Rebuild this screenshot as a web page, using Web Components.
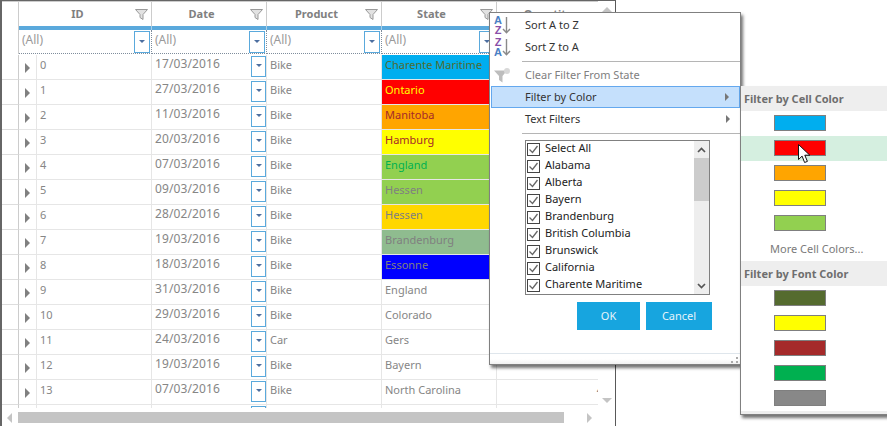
<!DOCTYPE html>
<html><head><meta charset="utf-8"><title>Grid filter</title>
<style>html,body{margin:0;padding:0;background:#fff}</style></head>
<body>
<grid-app></grid-app>
<script>
function def(name, css, html, init){
  customElements.define(name, class extends HTMLElement{
    constructor(){super();this.attachShadow({mode:'open'}).innerHTML='<style>'+css+'</style>'+html;}
    connectedCallback(){ if(init&&!this._i){this._i=1;init.call(this,this.shadowRoot);} }
  });
}
const FUNNEL='<svg width="13" height="11" viewBox="0 0 13 11"><path d="M.5.5h12L8 5.5v5L5 8.5v-3z" fill="#e2e2e2" stroke="#9a9a9a"/></svg>';

def('funnel-icon',':host{display:block;width:13px;height:11px}svg{display:block}',FUNNEL);

def('drop-box',`:host{display:flex;box-sizing:border-box;width:var(--w,16px);height:var(--h,22px);border:1px solid #5aa9dc;justify-content:center;align-items:var(--al,center);padding-top:var(--pt,0);background:#fff;flex:none}
i{display:block;width:0;height:0;border:3px solid transparent;border-top:3px solid #4d6fa0;border-bottom:0}`,'<i></i>');

def('head-cell',`:host{display:flex;align-items:center;box-sizing:border-box;height:24px;border-right:1px solid #ccc;font-weight:700;color:#808080;min-width:0}
.l{flex:1;text-align:center;padding-left:1px;padding-bottom:1px;white-space:nowrap}
funnel-icon{margin-right:3px}`,'<div class="l"><slot></slot></div><funnel-icon></funnel-icon>');

def('filter-cell',`:host{display:flex;align-items:center;justify-content:space-between;box-sizing:border-box;height:24px;border-right:1px dotted #7f8d9c;border-bottom:1px dotted #7f8d9c;padding:1px 1px 1px 3px;color:#9a9a9a;min-width:0;font-size:12px}
span{padding-bottom:3px}`,'<span><slot></slot></span><drop-box></drop-box>');

def('grid-row',`:host{display:grid;grid-template-columns:17px 18px 115px 115px 115px 115px 101px;height:25px;flex:none;color:#868686}
.c{box-sizing:border-box;height:25px;border-bottom:1px solid #e6e6e6;border-right:1px solid #e6e6e6;padding-left:3px;display:flex;align-items:center;white-space:nowrap;overflow:hidden;min-width:0}
.c span{padding-bottom:5px}
.g{border-right-color:#ccc;padding:0;border-bottom-color:#ddd}
.e{justify-content:flex-start;padding-left:6px}
.e i{display:block;width:0;height:0;border-left:5px solid #808080;border-top:5px solid transparent;border-bottom:5px solid transparent;margin-top:1px}
.d{justify-content:space-between;align-items:flex-start;padding-right:0;font-size:12px;letter-spacing:.12px}
.d span{padding:2px 0 0}
.d drop-box{--w:15px;--h:21px;--al:flex-start;--pt:7px;margin-top:1px}
.s{border-right:1px solid #e6e6e6}
.q{justify-content:flex-end;padding:0;border-right:0}
.q span{margin-right:-5px}`,
`<div class="c g"></div><div class="c e"><i></i></div><div class="c id"><span></span></div><div class="c d"><span></span><drop-box></drop-box></div><div class="c p"><span></span></div><div class="c s"><span></span></div><div class="c q"><span></span></div>`,
function(r){
  const a=n=>this.getAttribute(n)||'';
  r.querySelector('.id span').textContent=a('num');
  r.querySelector('.d span').textContent=a('date');
  r.querySelector('.p span').textContent=a('product');
  const s=r.querySelector('.s');s.firstChild.textContent=a('state');
  if(a('bg'))s.style.background=a('bg');
  if(a('fg'))s.style.color=a('fg');
  r.querySelector('.q span').textContent=a('qty');
});

def('grid-table',`:host{display:flex;flex-direction:column;flex:1;min-width:0;height:407px;overflow:hidden}
.hd{display:grid;grid-template-columns:17px 133px 115px 115px 115px 101px;border-top:1px solid #ccc;flex:none}
.g{border-right:1px solid #ccc}
.bar{display:grid;grid-template-columns:17px 133px 115px 115px 115px 101px;height:4px;flex:none}
.bar div{background:#5aa9dc;border-right:1px solid #a9cfe8}
.bar .g{background:#fff;border-right:1px solid #ccc}
.fl{display:grid;grid-template-columns:17px 133px 115px 115px 115px 101px;flex:none;margin-bottom:1px}
.q-cell{display:block;text-align:center;font-weight:700;color:#808080;height:24px;line-height:23px;padding-left:1px}
.rows{flex:1;overflow:hidden;display:flex;flex-direction:column}`,
`<div class="hd"><div class="g"></div><head-cell>ID</head-cell><head-cell>Date</head-cell><head-cell>Product</head-cell><head-cell>State</head-cell><div class="q-cell">Quantity</div></div>
<div class="bar"><div class="g"></div><div></div><div></div><div></div><div></div><div></div></div>
<div class="fl"><div class="g"></div><filter-cell>(All)</filter-cell><filter-cell>(All)</filter-cell><filter-cell>(All)</filter-cell><filter-cell>(All)</filter-cell><div></div></div>
<div class="rows"></div>`,
function(r){
  const D=[
  ['0','17/03/2016','Bike','Charente Maritime','#00aeef','#4f6b2f'],
  ['1','27/03/2016','Bike','Ontario','#ff0000','#ffff00'],
  ['2','11/03/2016','Bike','Manitoba','#ffa500','#a52a2a'],
  ['3','20/03/2016','Bike','Hamburg','#ffff00','#a52a2a'],
  ['4','07/03/2016','Bike','England','#92d050','#00b050'],
  ['5','09/03/2016','Bike','Hessen','#92d050','#808080'],
  ['6','28/02/2016','Bike','Hessen','#ffd700','#808080'],
  ['7','19/03/2016','Bike','Brandenburg','#8fbc8f','#808080'],
  ['8','18/03/2016','Bike','Essonne','#0000ff','#808080'],
  ['9','31/03/2016','Bike','England'],
  ['10','29/03/2016','Bike','Colorado'],
  ['11','24/03/2016','Car','Gers'],
  ['12','19/03/2016','Bike','Bayern','','','7'],
  ['13','07/03/2016','Bike','North Carolina','','','4'],
  ['','','','']];
  const box=r.querySelector('.rows');
  D.forEach(d=>{
    const e=document.createElement('grid-row');
    ['num','date','product','state','bg','fg','qty'].forEach((k,i)=>{if(d[i])e.setAttribute(k,d[i]);});
    box.appendChild(e);
  });
});

def('tri-arrow',`:host{display:block;width:0;height:0;border-style:solid;border-color:transparent;flex:none}
:host([dir=up]){border-width:0 5px 5px;border-bottom-color:#c4c4c4}
:host([dir=down]){border-width:5px 5px 0;border-top-color:#c4c4c4}
:host([dir=left]){border-width:5px 5px 5px 0;border-right-color:#c4c4c4}
:host([dir=right]){border-width:5px 0 5px 5px;border-left-color:#c4c4c4}`,'');

def('v-scroll',`:host{display:flex;flex-direction:column;justify-content:space-between;align-items:center;width:17px;height:407px;box-sizing:border-box;padding:6px 0 5px;flex:none}`,
'<tri-arrow dir="up"></tri-arrow><tri-arrow dir="down"></tri-arrow>');

def('h-scroll',`:host{display:flex;align-items:center;height:11px;margin-top:4px;flex:none}
.thumb{height:11px;width:546px;background:#c4c4c4;margin-left:6px}
.a{margin-left:5px}
.b{margin-left:23px}`,
'<tri-arrow class="a" dir="left"></tri-arrow><div class="thumb"></div><tri-arrow class="b" dir="right"></tri-arrow>');

def('grid-window',`:host{display:flex;flex-direction:column;box-sizing:border-box;width:616px;height:426px;border-left:2px solid #666;border-right:1px solid #595959;border-top:1px solid #666;background:#fff}
.top{display:flex}`,
'<div class="top"><grid-table></grid-table><v-scroll></v-scroll></div><h-scroll></h-scroll>');

def('menu-item',`:host{display:flex;align-items:center;height:22px;box-sizing:border-box;margin-left:1px;color:#333;flex:none}
:host([hot]){background:#c5e0fc;border:1px solid #64a8ee}
:host([dim]){color:#808080}
.ic{width:31px;display:flex;justify-content:center;align-items:center;flex:none;margin-right:3px}
:host([hot]) .ic{margin-left:-1px}
.t{flex:1;white-space:nowrap}
.ar{display:none;width:0;height:0;border-left:4px solid #777;border-top:4px solid transparent;border-bottom:4px solid transparent;margin-right:10px}
:host([sub]) .ar{display:block}`,
'<div class="ic"><slot name="icon"></slot></div><div class="t"><slot></slot></div><i class="ar"></i>');

def('sort-icon',`:host{display:flex;align-items:center;width:17px;height:20px;margin-right:8px}
.l{display:flex;flex-direction:column;font:700 11px/10px "Liberation Sans",sans-serif;width:8px;text-align:center}
.a{color:#4a80c4}.z{color:#8a4fa8}
svg{display:block}`,
'<div class="l"></div><svg width="9" height="17" viewBox="0 0 9 17"><path d="M4.5 0v15.5M1 12l3.5 3.7L8 12" fill="none" stroke="#8a8a8a" stroke-width="1.4"/></svg>',
function(r){const t=(this.getAttribute('order')||'AZ').split('');r.querySelector('.l').innerHTML=t.map(c=>'<span class="'+c.toLowerCase()+'">'+c+'</span>').join('');});

def('clear-icon',':host{display:block;width:17px;height:15px;margin-right:8px}svg{display:block}',
'<svg width="17" height="15" viewBox="0 0 17 15"><path d="M0 2.5h13L8.5 8v6.5L5 12V8z" fill="#bdbdbd"/><circle cx="13" cy="3" r="3" fill="#d8d8d8"/></svg>');

def('check-item',`:host{display:flex;align-items:flex-start;height:17px;flex:none;color:#222;padding-left:1px;white-space:nowrap}
.b{box-sizing:border-box;width:13px;height:13px;border:1px solid #444;margin-top:2px;margin-right:5px;background:#fff;flex:none}
svg{display:block}
.t{line-height:14px}`,
'<div class="b"><svg width="11" height="11" viewBox="0 0 11 11"><path d="M1.5 5.5l3 3 5-6.5" fill="none" stroke="#666" stroke-width="1.3"/></svg></div><div class="t"><slot></slot></div>');

def('check-list',`:host{display:flex;box-sizing:border-box;width:185px;height:155px;border:1px solid #808080;margin:4px 0 0 35px;overflow:hidden;flex:none}
.items{flex:1;display:flex;flex-direction:column;overflow:hidden}
.sb{width:15px;margin-right:0;background:#eee;display:flex;flex-direction:column;flex:none}
.btn{height:17px;display:flex;align-items:center;justify-content:center;flex:none}
.th{height:43px;background:#ccc;flex:none}
.sp{flex:1}
svg{display:block}`,
`<div class="items"><slot></slot></div><div class="sb"><div class="btn"><svg width="9" height="6" viewBox="0 0 9 6"><path d="M1 5l3.5-3.5L8 5" fill="none" stroke="#555" stroke-width="1.7"/></svg></div><div class="th"></div><div class="sp"></div><div class="btn"><svg width="9" height="6" viewBox="0 0 9 6"><path d="M1 1l3.5 3.5L8 1" fill="none" stroke="#555" stroke-width="1.7"/></svg></div></div>`);

def('blue-btn',`:host{display:flex;align-items:center;justify-content:center;height:28px;background:#17a5df;color:#e6f4fb;flex:none;box-sizing:border-box;padding-bottom:1px}`,'<slot></slot>');

def('filter-menu',`:host{position:absolute;left:489px;top:12px;width:252px;height:353px;box-sizing:border-box;border:1px solid #808080;background:#fff;box-shadow:2px 3px 3px rgba(0,0,0,.55);display:flex;flex-direction:column;padding-top:1px}
.sep{height:1px;background:#b5b5b5;margin:3px 0 2px 32px;flex:none}
.btns{display:flex;justify-content:flex-end;gap:6px;padding-right:28px;margin-top:7px}
.ok{width:63px}.ca{width:66px}
.foot{margin-top:auto;height:11px;border-top:1px solid #dfe6ec;background:linear-gradient(#fff 50%,#f1f1f1);box-sizing:border-box;display:flex;justify-content:flex-end;align-items:flex-end;padding:0 1px 0 0;flex:none}
svg{display:block}`,
`<menu-item><sort-icon slot="icon" order="AZ"></sort-icon>Sort A to Z</menu-item>
<menu-item><sort-icon slot="icon" order="ZA"></sort-icon>Sort Z to A</menu-item>
<div class="sep"></div>
<menu-item dim><clear-icon slot="icon"></clear-icon>Clear Filter From State</menu-item>
<menu-item hot sub>Filter by Color</menu-item>
<menu-item sub>Text Filters</menu-item>
<div class="sep"></div>
<check-list>
<check-item>Select All</check-item><check-item>Alabama</check-item><check-item>Alberta</check-item><check-item>Bayern</check-item><check-item>Brandenburg</check-item><check-item>British Columbia</check-item><check-item>Brunswick</check-item><check-item>California</check-item><check-item>Charente Maritime</check-item>
</check-list>
<div class="btns"><blue-btn class="ok">OK</blue-btn><blue-btn class="ca">Cancel</blue-btn></div>
<div class="foot"><svg width="8" height="7" viewBox="0 0 8 7"><path d="M5 0h2v2H5zM0 4h2v2H0zM5 4h2v2H5z" fill="#aaa"/></svg></div>`);

def('swatch-row',`:host{display:flex;align-items:center;height:25px;box-sizing:border-box;padding:0 0 1px 33px;flex:none}
:host([hot]){background:#d5efe0}
i{display:block;box-sizing:border-box;width:52px;height:16px;border:1px solid #7f7f7f;background:var(--c)}`,'<i></i>',
function(r){r.querySelector('i').style.setProperty('--c',this.getAttribute('color'));});

def('panel-head',`:host{display:flex;align-items:center;height:25px;background:#eee;font-weight:700;color:#6e6e6e;padding-left:3px;box-sizing:border-box;flex:none;white-space:nowrap}`,'<slot></slot>');

def('color-panel',`:host{position:absolute;left:740px;top:86px;width:170px;height:329px;box-sizing:border-box;border-left:1px solid #808080;border-bottom:1px solid #808080;background:#fff;box-shadow:2px 3px 3px rgba(0,0,0,.55);display:flex;flex-direction:column}
.more{height:25px;display:flex;align-items:center;padding-left:29px;color:#7a7a7a;flex:none;box-sizing:border-box}
.end{margin-top:auto;height:3px;background:#eee;flex:none}`,
`<panel-head>Filter by Cell Color</panel-head>
<swatch-row color="#00aeef"></swatch-row><swatch-row hot color="#ff0000"></swatch-row><swatch-row color="#ffa500"></swatch-row><swatch-row color="#ffff00"></swatch-row><swatch-row color="#92d050"></swatch-row>
<div class="more">More Cell Colors...</div>
<panel-head>Filter by Font Color</panel-head>
<swatch-row color="#556b2f"></swatch-row><swatch-row color="#ffff00"></swatch-row><swatch-row color="#a52a2a"></swatch-row><swatch-row color="#00b050"></swatch-row><swatch-row color="#888888"></swatch-row>
<div class="end"></div>`);

def('mouse-pointer',':host{position:absolute;left:798px;top:144px;width:13px;height:20px}svg{display:block}',
'<svg width="13" height="20" viewBox="0 0 13 20"><path d="M.5.5v15l3.6-3.4 2.5 6.4 2.8-1.1-2.6-6.2h5z" fill="#fff" stroke="#111" stroke-linejoin="round"/></svg>');

def('grid-app',`:host{display:block;position:relative;width:887px;height:430px;overflow:hidden;background:#fff;font:11px/14px "Noto Sans",sans-serif}`,
'<grid-window></grid-window><filter-menu></filter-menu><color-panel></color-panel><mouse-pointer></mouse-pointer>');
</script>
</body></html>
